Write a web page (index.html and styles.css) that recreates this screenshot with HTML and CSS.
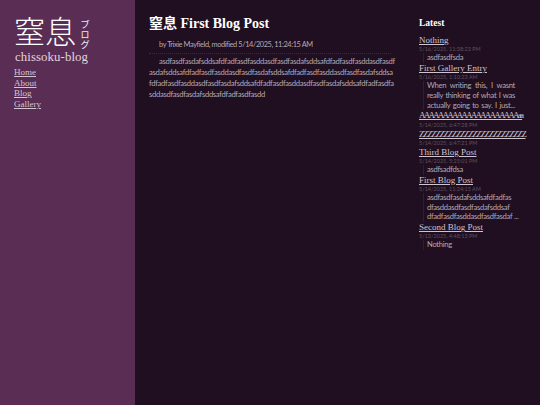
FILE: index.html
```html
<!DOCTYPE html>
<html lang="ja">
<head>
<meta charset="utf-8">
<title>窒息 First Blog Post</title>
<link rel="stylesheet" href="styles.css">
</head>
<body>
<div class="page">
  <aside class="side">
    <div class="brand">
      <div class="logo"><span class="kanji">窒息</span><span class="kana">ブログ</span></div>
      <div class="romaji">chissoku-blog</div>
    </div>
    <nav class="nav">
      <a href="#">Home</a>
      <a href="#">About</a>
      <a href="#">Blog</a>
      <a href="#">Gallery</a>
    </nav>
  </aside>
  <main class="main">
    <h1 class="title">窒息 First Blog Post</h1>
    <p class="byline">by Trixie Mayfield, modified 5/14/2025, 11:24:15 AM</p>
    <p class="body">asdfasdfasdafsddsafdfadfasdfasddasdfasdfasdafsddsafdfadfasdfasddasdfasdf<br>asdafsddsafdfadfasdfasddasdfasdfasdafsddsafdfadfasdfasddasdfasdfasdafsddsa<br>fdfadfasdfasddasdfasdfasdafsddsafdfadfasdfasddasdfasdfasdafsddsafdfadfasdfa<br>sddasdfasdfasdafsddsafdfadfasdfasdd</p>
  </main>
  <aside class="latest">
    <h2 class="latest-head">Latest</h2>
    <article class="item">
      <a class="item-title" href="#">Nothing</a>
      <div class="item-date">5/16/2025, 11:38:23 PM</div>
      <p class="item-text">asdfasdfsda</p>
    </article>
    <article class="item">
      <a class="item-title" href="#">First Gallery Entry</a>
      <div class="item-date">5/16/2025, 1:10:23 AM</div>
      <p class="item-text justify">When writing this, I wasnt<br>really thinking of what I was<br>actually going to say. I just...</p>
    </article>
    <article class="item">
      <a class="item-title squeeze-a" href="#">AAAAAAAAAAAAAAAAAAAAAaa</a>
      <div class="item-date">5/14/2025, 6:47:28 PM</div>
    </article>
    <article class="item">
      <a class="item-title squeeze-z" href="#">ZZZZZZZZZZZZZZZZZZZZZZZZZZ</a>
      <div class="item-date">5/14/2025, 6:47:21 PM</div>
    </article>
    <article class="item">
      <a class="item-title" href="#">Third Blog Post</a>
      <div class="item-date">5/14/2025, 5:25:01 PM</div>
      <p class="item-text">asdfsadfdsa</p>
    </article>
    <article class="item">
      <a class="item-title" href="#">First Blog Post</a>
      <div class="item-date">5/14/2025, 11:24:15 AM</div>
      <p class="item-text">asdfasdfasdafsddsafdfadfas<br>dfasddasdfasdfasdafsddsaf<br>dfadfasdfasddasdfasdfasdaf ...</p>
    </article>
    <article class="item">
      <a class="item-title" href="#">Second Blog Post</a>
      <div class="item-date">5/13/2025, 4:48:13 PM</div>
      <p class="item-text">Nothing</p>
    </article>
  </aside>
</div>
</body>
</html>
```

FILE: styles.css
```css
* { box-sizing: border-box; }
html, body { margin: 0; height: 100%; }
body {
  background: #1f0f20;
  color: #d8ccd8;
  font-family: "Lato", "Noto Sans CJK JP", sans-serif;
}
.page {
  display: grid;
  grid-template-columns: 135px 270px 135px;
  min-height: 405px;
}
.side {
  background: #5a2d55;
  padding: 15px 0 0 14px;
  font-family: "Liberation Serif", "Noto Sans CJK JP", serif;
}
.logo { display: flex; align-items: flex-start; color: #fff; }
.kanji { font-size: 31px; line-height: 36px; font-weight: 300; }
.kana {
  writing-mode: vertical-rl;
  font-size: 9.5px;
  line-height: 10px;
  margin: 5px 0 0 3px;
  letter-spacing: 0.5px;
  color: #eee;
}
.romaji { font-size: 12.8px; line-height: 13px; margin: 0 0 0 1px; color: #e0d6df; letter-spacing: 0.1px; }
.nav { display: flex; flex-direction: column; margin-top: 3px; }
.nav a { font-size: 9px; line-height: 10.6px; color: #d3c4d0; }
.main { padding: 14px 14px 0; }
.title {
  margin: 0;
  font-family: "Liberation Serif", "Noto Sans CJK JP", serif;
  font-size: 14px;
  line-height: 20px;
  font-weight: 700;
  color: #fff;
}
.byline {
  margin: 4px 0 0;
  padding: 0 0 1px 10px;
  font-size: 7.4px;
  line-height: 14px;
  color: #b5a8b5;
  letter-spacing: -0.4px;
  border-bottom: 1px dotted #3a2a3a;
}
.body {
  margin: 0;
  padding-top: 2px;
  font-size: 7.6px;
  letter-spacing: -0.28px;
  line-height: 10.95px;
  color: #b5a8b5;
  text-indent: 10px;
  white-space: nowrap;
}
.latest { padding: 16px 14px 0 14px; }
.latest-head {
  margin: 0 0 5px;
  font-family: "Liberation Serif", serif;
  font-size: 9.5px;
  line-height: 14px;
  font-weight: 700;
  color: #fff;
}
.item-title {
  display: block;
  font-family: "Liberation Serif", serif;
  font-size: 9px;
  line-height: 10.3px;
  color: #cfc3cf;
  white-space: nowrap;
}
.squeeze-a { letter-spacing: -1.8px; }
.squeeze-z { letter-spacing: -1.4px; }
.item-date {
  font-size: 5.5px;
  line-height: 8px;
  color: #5f505f;
}
.item-text {
  margin: 0 0 0 4px;
  padding-left: 3px;
  border-left: 1px solid #30202f;
  font-size: 7.6px;
  letter-spacing: -0.28px;
  line-height: 9.67px;
  color: #b5a8b5;
  width: 92px;
  white-space: nowrap;
}
.item-text.justify { white-space: normal; text-align: justify; text-align-last: justify; }
```
